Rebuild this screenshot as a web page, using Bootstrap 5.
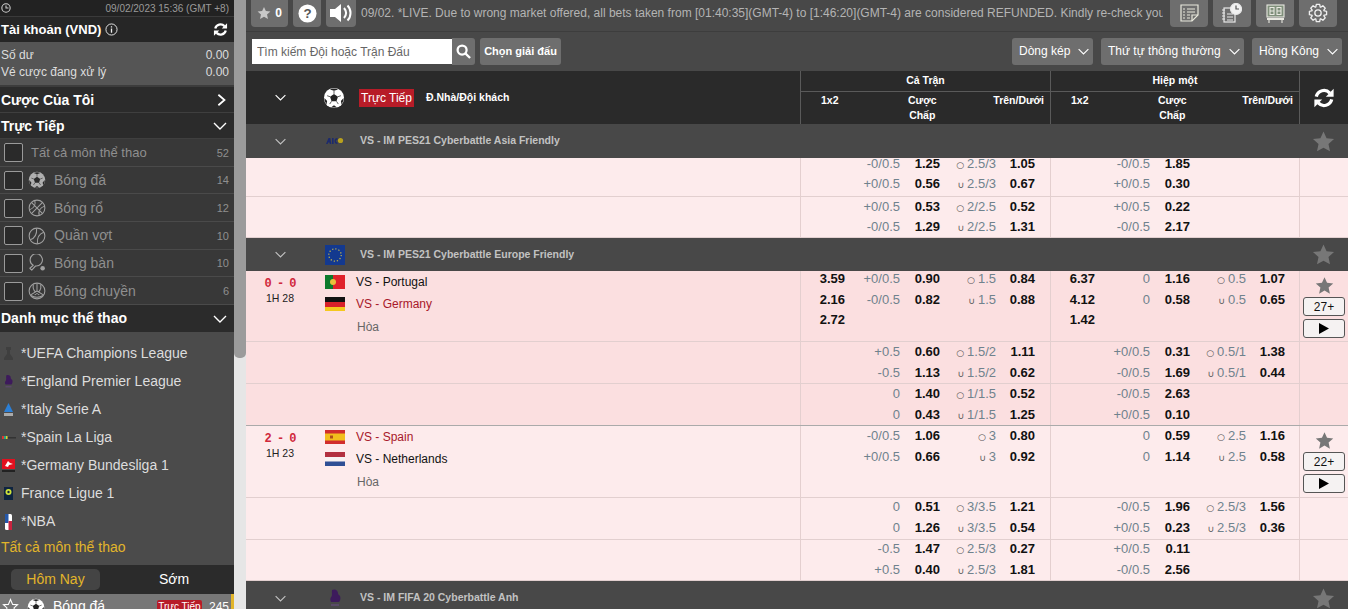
<!DOCTYPE html>
<html lang="vi">
<head>
<meta charset="UTF-8">
<meta name="viewport" content="width=device-width, initial-scale=1.0">
<title>Thể thao</title>
<link href="https://cdn.jsdelivr.net/npm/bootstrap@5.3.0/dist/css/bootstrap.min.css" rel="stylesheet">
<style>
html, body { height: 100%; overflow: hidden; }
body { font-family: "Liberation Sans", Arial, sans-serif; font-size: 12px; background: #fff; color: #111; }
.app-shell { height: 609px; overflow: hidden; }
svg { display: block; flex: none; }

/* sidebar */
.side-panel { width: 234px; flex: none; background: #2b2b2b; color: #fff; height: 609px; overflow: hidden; }
.side-clock { height: 17px; background: #222; color: #9a9a9a; font-size: 10px; padding: 0 5px 0 1px; border-bottom: 1px solid #3a3a3a; }
.side-head { height: 26px; background: #2b2b2b; font-size: 14px; font-weight: 700; padding: 1px 6px 0 1px; border-bottom: 1px solid #3f3f3f; }
.side-head.first { height: 25px; background: #262626; border: 0; font-size: 13px; padding-top: 0; }
.side-head.tall { height: 27px; border: 0; }
.balance { height: 45px; background: #555; color: #ddd; font-size: 12px; padding: 5px 5px 0 1px; line-height: 17px; border-bottom: 2px solid #3c3c3c; }
.live-item { height: 27.67px; background: #383838; color: #8f8f8f; font-size: 14px; padding: 1px 5px 0 4px; border-bottom: 1px solid #4a4a4a; }
.live-all { font-size: 13px; margin-left: 3px; }
.tick { width: 19px; height: 19px; background: #2a2a2a; border: 1px solid #9a9a9a; border-radius: 2px; flex: none; margin-right: 5px; }
.live-item .cnt { font-size: 11px; color: #8f8f8f; margin-left: auto; }
.live-item svg { color: #a0a0a0; }
.dim-ball { opacity: .6; }
.league-box { background: #4b4b4b; height: 233px; padding-top: 8px; }
.league-item { height: 28px; color: #ddd; font-size: 14px; padding-left: 1px; }
.league-item svg { margin-right: 5px; }
.all-sports { color: #e2b52a; font-size: 14px; padding: 1px 0 0 1px; }
.tabs-bar { height: 29px; background: #2b2b2b; font-size: 14px; }
.tab-on { width: 89px; height: 21px; margin-left: 11px; background: #444; color: #e2b52a; border-radius: 5px; }
.tab-off { width: 120px; margin-left: 14px; }
.sport-row { height: 26px; background: #777; font-size: 14px; padding-left: 2px; border-right: 3px solid #e2b52a; }
.live-tag { background: #b71c28; color: #fff; font-size: 10px; line-height: 13px; border-radius: 2px; width: 45px; text-align: center; white-space: nowrap; flex: none; }
.sport-cnt { font-size: 12px; margin: 0 2px 0 7px; }

.fake-scroll { width: 12px; flex: none; background: #e6e6e6; }
.fake-scroll div { height: 358px; background: #9b9b9b; border-radius: 0 0 5px 5px; }

/* top bars */
.main-area { width: 1102px; flex: none; }
.top-bar { height: 32px; background: #484848; padding: 0 10px 0 5px; border-bottom: 1px solid #3d3d3d; gap: 5px; }
.tool-btn { height: 27px; margin-top: -5px; background: #6e6e6e; color: #fff; border-radius: 0 0 4px 4px; font-size: 12px; font-weight: 700; }
.tool-fav { width: 37px; }
.tool-help { width: 28px; }
.tool-sound { width: 30px; }
.tool-icon { width: 38px; }
.fav-star { color: #c8c8c8; }
.ticker { width: 802px; margin: -5px 2px 0 0; overflow: hidden; white-space: nowrap; color: #b4b4b4; font-size: 12px; }
.filter-bar { height: 39px; background: #484848; padding: 6px 6px 0 6px; }
.find-box { width: 200px; height: 25px; margin-top: 1px; border: 0; border-radius: 0; font-size: 12px; font-family: "Liberation Sans", Arial, sans-serif; padding: 0 5px; }
.find-box::placeholder { color: #666; }
.find-btn { width: 23px; height: 27px; background: #6e6e6e; border-radius: 0 3px 3px 0; }
.pick-btn { height: 27px; background: #6e6e6e; color: #fff; border: 0; border-radius: 3px; font-size: 12px; padding: 0; line-height: 27px; white-space: nowrap; font-family: "Liberation Sans", Arial, sans-serif; }
.pick-btn.bold { width: 81px; margin-left: 5px; font-weight: 700; font-size: 11px; }
.pick-btn.wide { gap: 7px; padding-left: 7px; }
.drop-a { width: 81px; }
.drop-b { width: 143px; }
.drop-c { width: 90px; }

/* table head */
.odds-head { height: 53px; background: #2a2a2a; color: #fff; font-size: 10.5px; font-weight: 700; }
.head-left { width: 554px; flex: none; }
.head-half { flex: none; border-left: 1px solid #5a5a5a; }
.head-w1 { width: 250px; }
.head-w2 { width: 249px; }
.head-w3 { width: 49px; }
.head-top { height: 21px; padding-bottom: 1px; border-bottom: 1px solid #5a5a5a; }
.head-cols { position: relative; height: 32px; line-height: 15px; }
.head-cols span { position: absolute; top: 1px; }
.c-12 { left: 20px; }
.c-hdp { left: 107px; }
.c-ou { right: 6px; }
.head-ball { margin-left: 9px; }
.live-mark { background: #b71c28; color: #fff; font-size: 12px; font-weight: 400; line-height: 18px; width: 55px; margin-left: 14px; text-align: center; white-space: nowrap; }

/* rows */
.col-one { width: 554px; flex: none; }
.col-a { width: 250px; flex: none; border-left: 1px solid #e4cfcf; }
.col-b { width: 249px; flex: none; border-left: 1px solid #e4cfcf; }
.col-c { width: 49px; flex: none; border-left: 1px solid #e4cfcf; }
.grp-head { background: #484848; color: #c2c2c2; font-size: 10.5px; font-weight: 700; position: relative; z-index: 2; }
.grp-chev { width: 68px; padding-left: 28px; }
.grp-logo { margin-left: 11px; margin-right: 15px; }
.grp-star { width: 49px; color: #777; }
.odd-row { overflow: hidden; border-bottom: 1px solid #e2cfcf; }
.odd-row.hard-line { border-bottom-color: #aaa; }
.tint-a { background: #fdebec; }
.tint-b { background: #fbdfe0; }
.odd-line { display: grid; grid-template-columns: 44px 55px 40px 56px 39px; text-align: right; font-size: 13px; }
.odd-line b { color: #111; }
.odd-hdp { color: #6f828d; }
.odd-ou { color: #6f828d; white-space: nowrap; }
.odd-ou i { font-family: "DejaVu Sans", sans-serif; font-style: normal; font-size: 9px; line-height: 0; color: #555; margin-right: 3px; }
.clock-cell { width: 68px; text-align: center; padding-top: 7px; flex: none; margin-right: 11px; }
.score-txt { color: #d0283c; font-family: "Liberation Mono", monospace; font-weight: 700; font-size: 12px; line-height: 13px; letter-spacing: -1px; }
.time-txt { font-size: 10.5px; line-height: 14px; color: #222; }
.team-line { height: 22px; font-size: 12px; color: #111; }
.team-line.hot { color: #a8182a; }
.team-line.draw { height: 24px; color: #666; padding-left: 32px; }
.team-line svg { margin-right: 11px; }
.side-stack { padding-top: 5px; }
.side-star { color: #777; }
.small-btn { width: 42px; height: 19px; background: #f5f2f2; border: 1px solid #555; border-radius: 3px; font-size: 12px; color: #111; margin-top: 2px; }
.small-btn.play { margin-top: 3px; }
</style>
</head>
<body>
<svg width="0" height="0" class="position-absolute">
  <symbol id="ic-star" viewBox="0 0 24 24"><polygon points="12,1.5 15.2,8.6 23,9.4 17.2,14.6 18.8,22.3 12,18.4 5.2,22.3 6.8,14.6 1,9.4 8.8,8.6" fill="currentColor"/></symbol>
  <symbol id="ic-down" viewBox="0 0 16 16"><polyline points="2,5 8,11 14,5" fill="none" stroke="currentColor" stroke-width="1.4"/></symbol>
  <symbol id="ic-right" viewBox="0 0 16 16"><polyline points="5,2 12,8 5,14" fill="none" stroke="currentColor" stroke-width="2"/></symbol>
  <symbol id="ic-sync" viewBox="0 0 24 24"><g fill="none" stroke="currentColor" stroke-width="3.6"><path d="M3.6 10.5A8.6 8.6 0 0 1 18.3 6.6"/><path d="M20.4 13.5A8.6 8.6 0 0 1 5.7 17.4"/></g><polygon points="22.5,2 22.5,10.5 14,10.5" fill="currentColor"/><polygon points="1.5,22 1.5,13.5 10,13.5" fill="currentColor"/></symbol>
  <symbol id="ic-ball" viewBox="0 0 24 24"><circle cx="12" cy="12" r="11" fill="#fff"/><polygon points="12,7.5 16.3,10.6 14.7,15.6 9.3,15.6 7.7,10.6" fill="#222"/><path d="M7.5 2.6 12 4.2l4.5-1.6A10.5 10.5 0 0 0 7.5 2.6ZM1.5 12l3 3.3L3.8 19A10.5 10.5 0 0 1 1.5 12ZM22.5 12l-3 3.3.7 3.7A10.5 10.5 0 0 0 22.5 12ZM9 22l3-2 3 2a10.5 10.5 0 0 1-6 0Z" fill="#222"/><path d="M12 4.2v3.3M7.7 10.6 4.5 9.5M16.3 10.6l3.2-1.1M9.3 15.6l-2 3M14.7 15.6l2 3" stroke="#222" stroke-width=".8"/></symbol>
  <symbol id="ic-basket" viewBox="0 0 24 24"><g fill="none" stroke="currentColor" stroke-width="1.4"><circle cx="12" cy="12" r="10.5"/><path d="M4.6 4.6 19.4 19.4M19.4 4.6 4.6 19.4M9 2C10.5 7 8 12 2 14.5M22 9.5C16 12 13.5 17 15 22"/></g></symbol>
  <symbol id="ic-tennis" viewBox="0 0 24 24"><g fill="none" stroke="currentColor" stroke-width="1.4"><circle cx="12" cy="12" r="10.5"/><path d="M3 17C9 15 12 10 11.5 2M21 7C15 9 12 14 12.5 22"/></g></symbol>
  <symbol id="ic-pong" viewBox="0 0 24 24"><path d="M7 15A8.2 8.2 0 1 1 10 16L5 21.5 2.5 19Z" fill="none" stroke="currentColor" stroke-width="1.5" stroke-linejoin="round"/><circle cx="19.5" cy="19" r="3" fill="currentColor"/></symbol>
  <symbol id="ic-volley" viewBox="0 0 24 24"><g fill="none" stroke="currentColor" stroke-width="1.4"><circle cx="12" cy="12" r="10.5"/><path d="M12 12V2M12 12 3 17.5M12 12l9 5.5M7 3.5C6 9 9 14 15 17M17 3.5C18 9 15 14 9 17M4 18c5 3 11 3 16 0"/></g></symbol>
  <symbol id="ic-eu" viewBox="0 0 20 20"><rect width="20" height="20" fill="#13398f"/><circle cx="10" cy="10" r="6.2" fill="none" stroke="#c9b84a" stroke-width="1.2" stroke-dasharray="1.2 2"/></symbol>
  <symbol id="ic-pt" viewBox="0 0 20 14"><rect width="8" height="14" fill="#0d7a2c"/><rect x="8" width="12" height="14" fill="#e0212b"/><circle cx="8" cy="7" r="3" fill="#e8c13b"/></symbol>
  <symbol id="ic-de" viewBox="0 0 20 14"><rect width="20" height="5" fill="#111"/><rect y="5" width="20" height="5" fill="#d8202a"/><rect y="10" width="20" height="4" fill="#f4c81e"/></symbol>
  <symbol id="ic-es" viewBox="0 0 20 14"><rect width="20" height="14" fill="#d12d2d"/><rect y="3.5" width="20" height="7" fill="#f2be1d"/><rect x="5" y="5.5" width="3" height="3" fill="#b0501c"/></symbol>
  <symbol id="ic-nl" viewBox="0 0 20 14"><rect width="20" height="5" fill="#b23040"/><rect y="5" width="20" height="4.5" fill="#f6f2f2"/><rect y="9.5" width="20" height="4.5" fill="#2f4f95"/></symbol>
  <symbol id="ic-afc" viewBox="0 0 20 20"><g fill="#1c2a6d"><path d="M1 13 3.5 7h1.800l1 6H4.800L4.600 11.5H3.200L2.600 13Z"/><rect x="7" y="7" width="1.6" height="6"/><path d="M9.5 10a3 3 0 0 1 3-3v1.500a1.500 1.500 0 0 0 0 3V13a3 3 0 0 1-3-3Z"/></g><circle cx="15.5" cy="9.5" r="2.6" fill="#b9a11e"/></symbol>
  <symbol id="ic-pl" viewBox="0 0 20 20"><path d="M7 2c3-1.500 6 .5 6 3 0 1.500 1 2 2 3 1 2 0 5-1 6H6C5 12 5 10 6.500 8.500 7.500 7 6.500 4 7 2Z" fill="#3d1a5c"/><rect x="6" y="16" width="8" height="2" fill="#5a4a68"/></symbol>
</svg>

<div class="app-shell d-flex">
  <aside class="side-panel">
    <div class="side-clock d-flex justify-content-between align-items-center">
      <svg width="10" height="10" viewBox="0 0 12 12" fill="none" stroke="#cfcfcf" stroke-width="1.3"><circle cx="6" cy="6" r="5"/><path d="M6 3v3h3"/></svg>
      <span>09/02/2023 15:36 (GMT +8)</span>
    </div>
    <div class="side-head first d-flex align-items-center">
      <span>Tài khoản (VND)</span>
      <svg class="ms-1" width="13" height="13" viewBox="0 0 14 14" fill="none" stroke="#eee"><circle cx="7" cy="7" r="6"/><path d="M7 6v4.500M7 3.500v1.300" stroke-width="1.4"/></svg>
      <svg class="ms-auto text-white" width="15" height="15"><use href="#ic-sync"/></svg>
    </div>
    <div class="balance">
      <div class="d-flex justify-content-between"><span>Số dư</span><span>0.00</span></div>
      <div class="d-flex justify-content-between"><span>Vé cược đang xử lý</span><span>0.00</span></div>
    </div>
    <div class="side-head d-flex align-items-center justify-content-between"><span>Cược Của Tôi</span><svg width="14" height="14"><use href="#ic-right"/></svg></div>
    <div class="side-head d-flex align-items-center justify-content-between"><span>Trực Tiếp</span><svg width="16" height="16"><use href="#ic-down"/></svg></div>
    <div class="live-item d-flex align-items-center"><span class="tick"></span><span class="live-all">Tất cả môn thể thao</span><span class="cnt">52</span></div>
    <div class="live-item d-flex align-items-center"><span class="tick"></span><svg class="dim-ball" width="18" height="18"><use href="#ic-ball"/></svg><span class="ms-2">Bóng đá</span><span class="cnt">14</span></div>
    <div class="live-item d-flex align-items-center"><span class="tick"></span><svg width="18" height="18"><use href="#ic-basket"/></svg><span class="ms-2">Bóng rổ</span><span class="cnt">12</span></div>
    <div class="live-item d-flex align-items-center"><span class="tick"></span><svg width="18" height="18"><use href="#ic-tennis"/></svg><span class="ms-2">Quần vợt</span><span class="cnt">10</span></div>
    <div class="live-item d-flex align-items-center"><span class="tick"></span><svg width="18" height="18"><use href="#ic-pong"/></svg><span class="ms-2">Bóng bàn</span><span class="cnt">10</span></div>
    <div class="live-item d-flex align-items-center"><span class="tick"></span><svg width="18" height="18"><use href="#ic-volley"/></svg><span class="ms-2">Bóng chuyền</span><span class="cnt">6</span></div>
    <div class="side-head tall d-flex align-items-center justify-content-between"><span>Danh mục thể thao</span><svg width="16" height="16"><use href="#ic-down"/></svg></div>
    <div class="league-box">
      <div class="league-item d-flex align-items-center"><svg width="15" height="15" viewBox="0 0 15 15"><path d="M5 1h5v3H9v4l3 4v2H3v-2l3-4V4H5Z" fill="#3f3f3f"/></svg>*UEFA Champions League</div>
      <div class="league-item d-flex align-items-center"><svg width="15" height="15"><use href="#ic-pl"/></svg>*England Premier League</div>
      <div class="league-item d-flex align-items-center"><svg width="15" height="15" viewBox="0 0 15 15"><path d="M7.500 1 12 10H3Z" fill="#2b7fd6"/><rect x="3" y="11" width="9" height="3" fill="#aaa"/></svg>*Italy Serie A</div>
      <div class="league-item d-flex align-items-center"><svg width="15" height="15" viewBox="0 0 15 15"><rect x="1" y="6" width="2" height="3" fill="#d33"/><rect x="3" y="6" width="2" height="3" fill="#2a8"/><rect x="5" y="6" width="1.5" height="3" fill="#dc3"/><rect x="7" y="7" width="8" height="1.5" fill="#333"/></svg>*Spain La Liga</div>
      <div class="league-item d-flex align-items-center"><svg width="15" height="15" viewBox="0 0 15 15"><rect x="1" y="1" width="13" height="10" fill="#e2101f"/><path d="M4 8 7 3l2 2 3 1-4 1-1 2Z" fill="#fff"/><rect x="1" y="12" width="13" height="2" fill="#222"/></svg>*Germany Bundesliga 1</div>
      <div class="league-item d-flex align-items-center"><svg width="15" height="15" viewBox="0 0 15 15"><rect x="3" y="1" width="9" height="13" fill="#0e2440"/><circle cx="7.5" cy="6" r="3" fill="#cfe33a"/><circle cx="7.5" cy="6" r="1.2" fill="#0e2440"/></svg>France Ligue 1</div>
      <div class="league-item d-flex align-items-center"><svg width="15" height="16" viewBox="0 0 15 16"><rect x="4" y="0" width="7" height="16" rx="1.5" fill="#fff"/><rect x="4" y="0" width="3.5" height="9" fill="#2457a8"/><rect x="7.5" y="7" width="3.5" height="9" fill="#c9243f"/></svg>*NBA</div>
      <div class="all-sports">Tất cả môn thể thao</div>
    </div>
    <div class="tabs-bar d-flex align-items-center text-center">
      <span class="tab-on d-flex align-items-center justify-content-center">Hôm Nay</span>
      <span class="tab-off">Sớm</span>
    </div>
    <div class="sport-row d-flex align-items-center">
      <svg width="17" height="17" viewBox="0 0 24 24" class="text-white"><polygon points="12,2 15,9 22,9.5 17,14 18.5,21 12,17.5 5.5,21 7,14 2,9.5 9,9" fill="none" stroke="currentColor" stroke-width="1.5"/></svg>
      <svg class="ms-2" width="18" height="18"><use href="#ic-ball"/></svg>
      <span class="ms-2">Bóng đá</span>
      <span class="live-tag ms-auto">Trực Tiếp</span>
      <span class="sport-cnt">245</span>
    </div>
  </aside>
  <div class="fake-scroll"><div></div></div>

  <main class="main-area">
    <div class="top-bar d-flex align-items-center">
      <div class="tool-btn tool-fav d-flex align-items-center justify-content-center gap-1"><svg class="fav-star" width="14" height="14"><use href="#ic-star"/></svg>0</div>
      <div class="tool-btn tool-help d-flex align-items-center justify-content-center"><svg width="19" height="19" viewBox="0 0 20 20"><circle cx="10" cy="10" r="9.5" fill="#fff"/><text x="10" y="15" text-anchor="middle" font-size="14" font-weight="700" font-family="Liberation Sans" fill="#555">?</text></svg></div>
      <div class="tool-btn tool-sound d-flex align-items-center justify-content-center"><svg width="24" height="20" viewBox="0 0 24 20"><path d="M1 6h5l6-5v18l-6-5H1Z" fill="#fff"/><path d="M15 5c2.500 3 2.500 7 0 10M18.500 2.500c4 4 4 11 0 15" fill="none" stroke="#fff" stroke-width="2"/></svg></div>
      <div class="ticker">09/02. *LIVE. Due to wrong market offered, all bets taken from [01:40:35](GMT-4) to [1:46:20](GMT-4) are considered REFUNDED. Kindly re-check you</div>
      <div class="tool-btn tool-icon d-flex align-items-center justify-content-center"><svg width="19" height="18" viewBox="0 0 19 18" fill="none" stroke="#e8e8dc" stroke-width="1.2"><path d="M1 1h17v10l-6 6H1Z"/><path d="M12 17v-6h6"/><path d="M3 5h2M7 5h8M3 8h2M7 8h8M3 11h2M7 11h3M3 14h2M7 14h3"/></svg></div>
      <div class="tool-btn tool-icon d-flex align-items-center justify-content-center"><svg width="20" height="20" viewBox="0 0 20 20" fill="none" stroke="#e8e8e8" stroke-width="1.2"><rect x="2" y="5" width="11" height="14" fill="#6e6e6e"/><path d="M0 7h3M0 10h3M0 13h3M0 16h3M5 11h6M5 14h6M5 17h6"/><circle cx="14" cy="6" r="5.5" fill="#f2f2f2"/><path d="M14 2.500V6h3" stroke="#555"/></svg></div>
      <div class="tool-btn tool-icon d-flex align-items-center justify-content-center"><svg width="19" height="19" viewBox="0 0 19 19" fill="none" stroke="#e8e8e0" stroke-width="1.1"><rect x="1" y="1" width="17" height="12" fill="#7f8f7a"/><path d="M4 3.500h4v7H4ZM11 3.500h4v7h-4ZM4 7h4M11 7h4"/><path d="M1 15h17" stroke-width="2"/><path d="M3 15v4M16 15v4"/></svg></div>
      <div class="tool-btn tool-icon d-flex align-items-center justify-content-center"><svg width="20" height="20" viewBox="0 0 24 24" fill="none" stroke="#f0f0f0" stroke-width="1.6" stroke-linejoin="round"><circle cx="12" cy="12" r="3.8"/><g><polyline points="9.24,5.35 10,1.7 14,1.7 14.76,5.35"/><polyline transform="rotate(45 12 12)" points="9.24,5.35 10,1.7 14,1.7 14.76,5.35"/><polyline transform="rotate(90 12 12)" points="9.24,5.35 10,1.7 14,1.7 14.76,5.35"/><polyline transform="rotate(135 12 12)" points="9.24,5.35 10,1.7 14,1.7 14.76,5.35"/><polyline transform="rotate(180 12 12)" points="9.24,5.35 10,1.7 14,1.7 14.76,5.35"/><polyline transform="rotate(225 12 12)" points="9.24,5.35 10,1.7 14,1.7 14.76,5.35"/><polyline transform="rotate(270 12 12)" points="9.24,5.35 10,1.7 14,1.7 14.76,5.35"/><polyline transform="rotate(315 12 12)" points="9.24,5.35 10,1.7 14,1.7 14.76,5.35"/></g></svg></div>
    </div>

    <div class="filter-bar d-flex">
      <input class="form-control find-box" placeholder="Tìm kiếm Đội hoặc Trận Đấu">
      <div class="find-btn d-flex align-items-center justify-content-center"><svg width="15" height="15" viewBox="0 0 16 16" fill="none" stroke="#fff" stroke-width="2.4"><circle cx="6.5" cy="6.5" r="4.8"/><path d="m10 10 5 5"/></svg></div>
      <button class="pick-btn bold">Chọn giải đấu</button>
      <div class="d-flex ms-auto gap-2">
        <button class="pick-btn wide d-flex align-items-center drop-a">Dòng kép <svg width="13" height="13"><use href="#ic-down"/></svg></button>
        <button class="pick-btn wide d-flex align-items-center drop-b">Thứ tự thông thường <svg width="13" height="13"><use href="#ic-down"/></svg></button>
        <button class="pick-btn wide d-flex align-items-center drop-c">Hồng Kông <svg width="13" height="13"><use href="#ic-down"/></svg></button>
      </div>
    </div>

    <div class="odds-head d-flex">
      <div class="head-left d-flex align-items-center">
        <div class="grp-chev"><svg width="13" height="13"><use href="#ic-down"/></svg></div>
        <svg class="head-ball" width="22" height="22"><use href="#ic-ball"/></svg>
        <span class="live-mark">Trực Tiếp</span>
        <span class="ms-2 ps-1">Đ.Nhà/Đội khách</span>
      </div>
      <div class="head-half head-w1">
        <div class="head-top d-flex align-items-center justify-content-center">Cả Trận</div>
        <div class="head-cols"><span class="c-12">1x2</span><span class="c-hdp text-center">Cược<br>Chấp</span><span class="c-ou">Trên/Dưới</span></div>
      </div>
      <div class="head-half head-w2">
        <div class="head-top d-flex align-items-center justify-content-center">Hiệp một</div>
        <div class="head-cols"><span class="c-12">1x2</span><span class="c-hdp text-center">Cược<br>Chấp</span><span class="c-ou">Trên/Dưới</span></div>
      </div>
      <div class="head-half head-w3 d-flex align-items-center justify-content-center"><svg width="22" height="22" class="text-white"><use href="#ic-sync"/></svg></div>
    </div>

    <div id="oddsList"></div>
  </main>
</div>

<script>
const rows = [
  { head: "VS - IM PES21 Cyberbattle Asia Friendly", logo: "ic-afc", h: 34 },
  { h: 39, tint: "tint-a", top: -4, lh: 20,
    a: [["", "-0/0.5", "1.25", "o 2.5/3", "1.05"], ["", "+0/0.5", "0.56", "u 2.5/3", "0.67"]],
    b: [["", "-0/0.5", "1.85"], ["", "+0/0.5", "0.30"]] },
  { h: 41, tint: "tint-a", top: 0, lh: 20,
    a: [["", "+0/0.5", "0.53", "o 2/2.5", "0.52"], ["", "-0/0.5", "1.29", "u 2/2.5", "1.31"]],
    b: [["", "+0/0.5", "0.22"], ["", "-0/0.5", "2.17"]] },
  { head: "VS - IM PES21 Cyberbattle Europe Friendly", logo: "ic-eu", h: 33 },
  { h: 71, tint: "tint-b", top: -2, lh: 20.5,
    match: { score: "0 - 0", time: "1H 28", t1: "VS - Portugal", f1: "ic-pt", t2: "VS - Germany", f2: "ic-de", hot: 2, more: "27+" },
    a: [["3.59", "+0/0.5", "0.90", "o 1.5", "0.84"], ["2.16", "-0/0.5", "0.82", "u 1.5", "0.88"], ["2.72"]],
    b: [["6.37", "0", "1.16", "o 0.5", "1.07"], ["4.12", "0", "0.58", "u 0.5", "0.65"], ["1.42"]] },
  { h: 42, tint: "tint-b", top: -1, lh: 21,
    a: [["", "+0.5", "0.60", "o 1.5/2", "1.11"], ["", "-0.5", "1.13", "u 1.5/2", "0.62"]],
    b: [["", "+0/0.5", "0.31", "o 0.5/1", "1.38"], ["", "-0/0.5", "1.69", "u 0.5/1", "0.44"]] },
  { h: 42, tint: "tint-b", top: -1, lh: 21, hard: true,
    a: [["", "0", "1.40", "o 1/1.5", "0.52"], ["", "0", "0.43", "u 1/1.5", "1.25"]],
    b: [["", "-0/0.5", "2.63"], ["", "+0/0.5", "0.10"]] },
  { h: 72, tint: "tint-a", top: -1, lh: 21,
    match: { score: "2 - 0", time: "1H 23", t1: "VS - Spain", f1: "ic-es", t2: "VS - Netherlands", f2: "ic-nl", hot: 1, more: "22+" },
    a: [["", "-0/0.5", "1.06", "o 3", "0.80"], ["", "+0/0.5", "0.66", "u 3", "0.92"]],
    b: [["", "0", "0.59", "o 2.5", "1.16"], ["", "0", "1.14", "u 2.5", "0.58"]] },
  { h: 42, tint: "tint-a", top: -1, lh: 20.5,
    a: [["", "0", "0.51", "o 3/3.5", "1.21"], ["", "0", "1.26", "u 3/3.5", "0.54"]],
    b: [["", "-0/0.5", "1.96", "o 2.5/3", "1.56"], ["", "+0/0.5", "0.23", "u 2.5/3", "0.36"]] },
  { h: 41, tint: "tint-a", top: -1, lh: 20.5,
    a: [["", "-0.5", "1.47", "o 2.5/3", "0.27"], ["", "+0.5", "0.40", "u 2.5/3", "1.81"]],
    b: [["", "+0/0.5", "0.11"], ["", "-0/0.5", "2.56"]] },
  { head: "VS - IM FIFA 20 Cyberbattle Anh", logo: "ic-pl", h: 34 }
];

function oddLine(l, lh) {
  // the over/under mark sits in front of the line value
  const mark = l[3] ? (l[3][0] == "o" ? "○" : "∪") : "";
  const ou = l[3] ? `<i>${mark}</i>${l[3].slice(2)}` : "";
  return `<div class="odd-line" style="line-height:${lh}px">
    <b>${l[0]}</b><span class="odd-hdp">${l[1] || ""}</span><b>${l[2] || ""}</b>
    <span class="odd-ou">${ou}</span><b>${l[4] || ""}</b></div>`;
}

function matchLeft(m) {
  return `<div class="d-flex">
    <div class="clock-cell"><div class="score-txt">${m.score}</div><div class="time-txt">${m.time}</div></div>
    <div>
      <div class="team-line d-flex align-items-center ${m.hot == 1 ? "hot" : ""}"><svg width="20" height="14"><use href="#${m.f1}"/></svg>${m.t1}</div>
      <div class="team-line d-flex align-items-center ${m.hot == 2 ? "hot" : ""}"><svg width="20" height="14"><use href="#${m.f2}"/></svg>${m.t2}</div>
      <div class="team-line draw d-flex align-items-center">Hòa</div>
    </div></div>`;
}

function matchSide(m) {
  return `<div class="d-flex flex-column align-items-center side-stack">
    <svg class="side-star" width="19" height="19"><use href="#ic-star"/></svg>
    <div class="small-btn d-flex align-items-center justify-content-center">${m.more}</div>
    <div class="small-btn play d-flex align-items-center justify-content-center"><svg width="10" height="11" viewBox="0 0 10 11"><polygon points="0,0 10,5.5 0,11" fill="#000"/></svg></div>
  </div>`;
}

document.getElementById("oddsList").innerHTML = rows.map(r => {
  if (r.head) {
    return `<div class="grp-head d-flex align-items-center" style="height:${r.h}px">
      <div class="col-one d-flex align-items-center">
        <div class="grp-chev"><svg width="13" height="13"><use href="#ic-down"/></svg></div>
        <svg class="grp-logo" width="20" height="20"><use href="#${r.logo}"/></svg>${r.head}
      </div>
      <div class="grp-star ms-auto d-flex justify-content-center"><svg width="23" height="23"><use href="#ic-star"/></svg></div>
    </div>`;
  }
  const top = `margin-top:${r.top}px`;
  return `<div class="odd-row d-flex ${r.tint} ${r.hard ? "hard-line" : ""}" style="height:${r.h}px">
    <div class="col-one">${r.match ? matchLeft(r.match) : ""}</div>
    <div class="col-a"><div style="${top}">${r.a.map(l => oddLine(l, r.lh)).join("")}</div></div>
    <div class="col-b"><div style="${top}">${r.b.map(l => oddLine(l, r.lh)).join("")}</div></div>
    <div class="col-c">${r.match ? matchSide(r.match) : ""}</div>
  </div>`;
}).join("");
</script>
<script src="https://cdn.jsdelivr.net/npm/bootstrap@5.3.0/dist/js/bootstrap.bundle.min.js"></script>
</body>
</html>
